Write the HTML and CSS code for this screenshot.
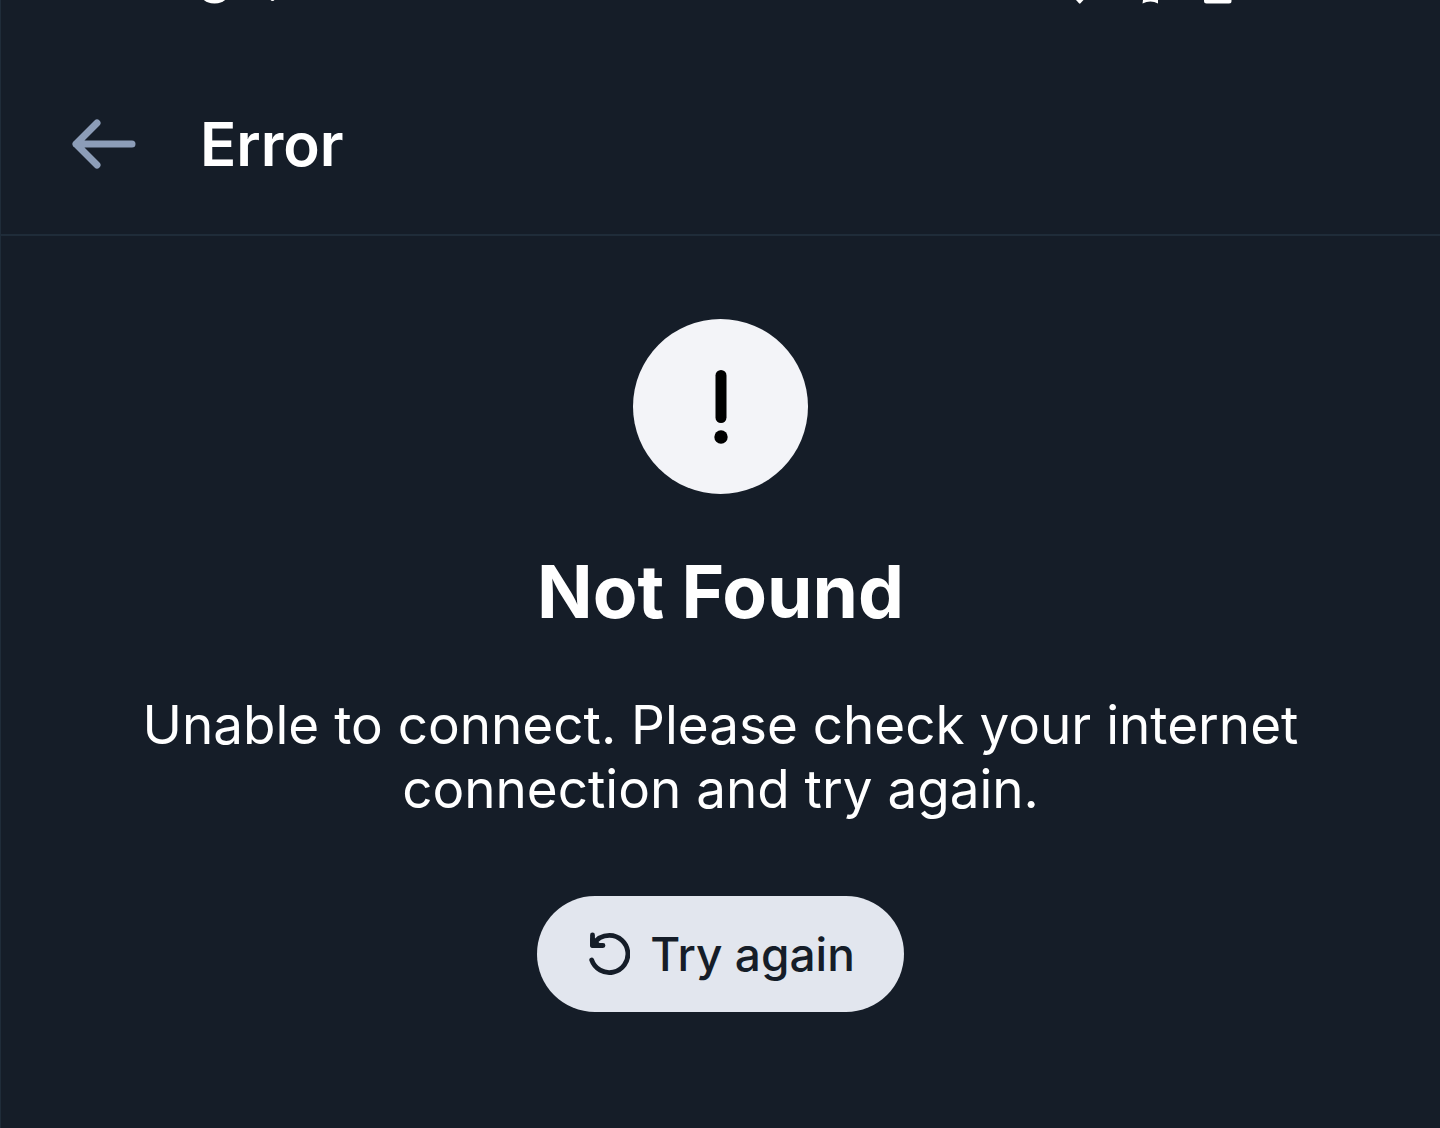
FILE: index.html
```html
<!DOCTYPE html>
<html lang="en">
<head>
    <meta charset="UTF-8">
    <meta name="viewport" content="width=device-width, initial-scale=1.0">
    <title>Error</title>
    <link rel="stylesheet" href="styles.css">
</head>
<body>
    <div class="screen">
        <div class="status-bar">
            <svg width="76" height="4" viewBox="0 0 76 4" fill="#fff" aria-hidden="true">
                <circle cx="15.500" cy="-14.500" r="18"/>
                <circle cx="73.500" cy="-1.200" r="2.200"/>
            </svg>
            <svg width="156" height="4" viewBox="0 0 156 4" fill="#fff" aria-hidden="true">
                <path d="M0 0h7.500l-3 3.300q-0.750 0.700-1.500 0z"/>
                <path d="M67 0h15v3.400q-7.500-3.600-15.500 0z"/>
                <path d="M128 0h27.500v1q0 2.500-2.500 2.500h-22.500q-2.500 0-2.500-2.500z"/>
            </svg>
        </div>
        <header class="header">
            <button class="back-button" type="button" aria-label="Go back">
                <svg width="64" height="64" viewBox="0 0 64 64" fill="none" stroke="#8c9db8" stroke-width="7" stroke-linecap="round" stroke-linejoin="round">
                    <path d="M25 11L4 32l21 21M4 32h56"/>
                </svg>
            </button>
            <h1 class="header-title">Error</h1>
        </header>
        <main class="content">
            <div class="error-icon">
                <svg width="175" height="175" viewBox="0 0 175 175" aria-hidden="true">
                    <rect x="82.500" y="51" width="11" height="53" rx="5.500"/>
                    <circle cx="88" cy="118" r="6.700"/>
                </svg>
            </div>
            <h2 class="error-title">Not Found</h2>
            <p class="error-message">Unable to connect. Please check your internet connection and try again.</p>
            <button class="retry-button" type="button">
                <svg width="44" height="44" viewBox="0 0 44 44" fill="none" stroke="#151d28" stroke-width="4.800" stroke-linecap="round" stroke-linejoin="round" aria-hidden="true">
                    <path d="M6.500 3v10.500H17"/>
                    <path d="M7 13C10.500 7 16.500 3.400 23.500 3.400A18.600 18.600 0 1 1 5.700 28"/>
                    <path d="M6.500 7.500v6h6z" fill="#151d28"/>
                </svg>
                Try again
            </button>
        </main>
    </div>
</body>
</html>
```

FILE: styles.css
```css
body {
    font-family: Inter, "Liberation Sans", sans-serif;
    margin: 0;
    background-color: #151d28;
    color: #fff;
}
.screen {
    box-sizing: border-box;
    min-height: 100vh;
    border-left: 1px solid #1f2c39;
}
.status-bar {
    display: flex;
    justify-content: space-between;
    padding: 0 208px 0 198px;
}
.header {
    display: flex;
    align-items: center;
    gap: 64px;
    padding: 102px 71px 52px;
    border-bottom: 2px solid #1f2c39;
}
.back-button {
    display: flex;
    padding: 0;
    border: none;
    background: none;
    cursor: pointer;
}
.header-title {
    margin: 0;
    font-size: 60px;
    font-weight: 600;
    line-height: 76px;
}
/* Error message */
.content {
    display: flex;
    flex-direction: column;
    align-items: center;
    padding: 83px 132px 116px;
    text-align: center;
}
.error-icon {
    display: flex;
    border-radius: 50%;
    background-color: #f3f4f8;
}
.error-title {
    margin: 52px 0 0;
    font-size: 73px;
    font-weight: 700;
    line-height: 92px;
}
.error-message {
    margin: 55px 0 0;
    font-size: 53px;
    line-height: 64px;
}
.retry-button {
    display: flex;
    align-items: center;
    gap: 20px;
    height: 116px;
    margin-top: 75px;
    padding: 0 49px;
    border: none;
    border-radius: 58px;
    background-color: #e2e6ee;
    color: #151d28;
    font-family: inherit;
    font-size: 46px;
    font-weight: 500;
    cursor: pointer;
}
```
